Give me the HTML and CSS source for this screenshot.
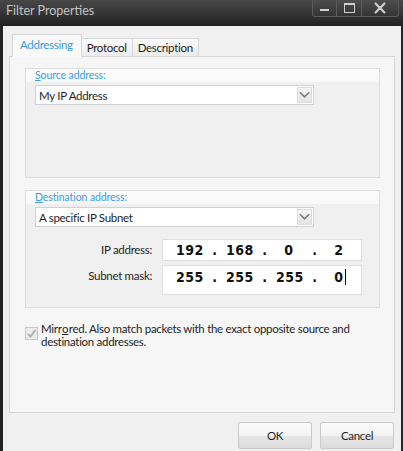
FILE: index.html
```html
<!DOCTYPE html>
<html>
<head>
<meta charset="utf-8">
<link rel="stylesheet" href="styles.css">
</head>
<body>
<div class="window">
  <div class="titlebar">
    <span class="title">Filter Properties</span>
    <div class="caption">
      <div class="cbtn min"><span class="minbar"></span></div>
      <div class="cbtn max"><span class="maxbox"></span></div>
      <div class="cbtn close">
        <svg width="14" height="12" viewBox="0 0 14 12"><path d="M2 1 L12 11 M12 1 L2 11" stroke="#cfcfcf" stroke-width="2.2" fill="none"/></svg>
      </div>
    </div>
  </div>
  <div class="client">
    <div class="tabs">
      <div class="tab active">Addressing</div>
      <div class="tab">Protocol</div>
      <div class="tab">Description</div>
    </div>
    <div class="panel">
      <div class="group g1">
        <div class="ghead"><u>S</u>ource address:</div>
        <div class="combo"><span>My IP Address</span><span class="drop"><svg width="14" height="10" viewBox="0 0 14 10"><path d="M2 2 L7 7 L12 2" stroke="#7a7a7a" stroke-width="1.6" fill="none"/></svg></span></div>
      </div>
      <div class="group g2">
        <div class="ghead"><u>D</u>estination address:</div>
        <div class="combo"><span>A specific IP Subnet</span><span class="drop"><svg width="14" height="10" viewBox="0 0 14 10"><path d="M2 2 L7 7 L12 2" stroke="#7a7a7a" stroke-width="1.6" fill="none"/></svg></span></div>
        <div class="fields">
          <div class="frow">
            <span class="flabel">IP address:</span>
            <div class="ipbox"><span class="oct">192</span><span class="dot">.</span><span class="oct">168</span><span class="dot">.</span><span class="oct">0</span><span class="dot">.</span><span class="oct">2</span></div>
          </div>
          <div class="frow">
            <span class="flabel">Subnet mask:</span>
            <div class="ipbox tall"><span class="oct">255</span><span class="dot">.</span><span class="oct">255</span><span class="dot">.</span><span class="oct">255</span><span class="dot">.</span><span class="oct"><span class="caret">0</span></span></div>
          </div>
        </div>
      </div>
      <div class="check">
        <span class="box"><svg width="11" height="11" viewBox="0 0 11 11"><path d="M2 6 L4.5 8.5 L9.5 2" stroke="#b0b0b0" stroke-width="2" fill="none"/></svg></span>
        <span class="ctext">Mirr<u>o</u>red. Also match packets with the exact opposite source and destination addresses.</span>
      </div>
    </div>
    <div class="buttons">
      <div class="btn">OK</div>
      <div class="btn">Cancel</div>
    </div>
  </div>
</div>
</body>
</html>
```
FILE: styles.css
```css
html, body {
  margin: 0;
  padding: 0;
  background: #1a1a1a;
}
body {
  font-family: Lato, "Noto Sans", sans-serif;
  font-size: 11.5px;
  letter-spacing: -0.3px;
  color: #1e1e1e;
}
.window {
  width: 403px;
  height: 451px;
  box-sizing: border-box;
  padding: 0 2px 0 3px;
  background: #232323;
  display: flex;
  flex-direction: column;
}
.titlebar {
  height: 26px;
  flex: none;
  display: flex;
  justify-content: space-between;
  align-items: flex-start;
  background: linear-gradient(#474747, #3a3a3a 10px, #2a2a2a 20px, #202020);
  margin: 0 -2px 0 -3px;
  padding: 0 4px 0 5px;
}
.title {
  color: #c4c4c4;
  font-size: 12.5px;
  letter-spacing: 0;
  line-height: 21px;
  padding-left: 1px;
}
.caption {
  display: flex;
}
.cbtn {
  height: 17px;
  border: 1px solid #5c5c5c;
  border-top: none;
  background: linear-gradient(#4d4d4d, #343434);
  display: flex;
  align-items: center;
  justify-content: center;
  box-sizing: border-box;
}
.min { width: 25px; border-radius: 0 0 0 3px; }
.max { width: 25px; border-left: none; }
.close { width: 37px; border-left: none; border-radius: 0 0 3px 0; }
.minbar {
  width: 9px;
  height: 2px;
  background: #cfcfcf;
  margin-top: 4px;
}
.maxbox {
  width: 9px;
  height: 7px;
  border: 1px solid #cfcfcf;
  border-top-width: 2px;
}
.client {
  flex: 1;
  background: #f0f0f0;
  padding: 8px 5px 0 6px;
  display: flex;
  flex-direction: column;
}
.tabs {
  display: flex;
  height: 22px;
  padding-left: 3px;
  align-items: flex-end;
}
.tab {
  height: 18px;
  box-sizing: border-box;
  border: 1px solid #d6d6d6;
  border-bottom: none;
  margin-left: -1px;
  padding: 0 5px 0 5px;
  line-height: 18px;
  background: linear-gradient(#fafafa, #ebebeb);
}
.tab.active {
  height: 23px;
  background: #f9f9f9;
  color: #3a9ce0;
  padding: 0 8px 0 7px;
  line-height: 20px;
  margin-left: 0;
  position: relative;
  z-index: 1;
  margin-bottom: -1px;
}
.panel {
  height: 357px;
  box-sizing: border-box;
  border: 1px solid #d6d6d6;
  background: #f6f6f6;
  padding: 11px 14px 0 15px;
  margin-right: 1px;
}
.group {
  border: 1px solid #dedede;
  background: #f0f0f0;
  padding: 0 0 0 9px;
  box-sizing: border-box;
}
.g1 { height: 110px; }
.g2 { height: 118px; margin-top: 12px; }
.ghead {
  height: 13px;
  line-height: 12px;
  margin-left: -9px;
  padding-left: 9px;
  background: linear-gradient(#fdfdfd, #f8f8f8);
  color: #3a9ce0;
  font-size: 10.5px;
  letter-spacing: -0.1px;
}
.combo {
  margin-top: 3px;
  width: 279px;
  height: 20px;
  box-sizing: border-box;
  border: 1px solid #d0d0d0;
  background: #fff;
  display: flex;
  align-items: center;
  justify-content: space-between;
  padding: 0 1px 0 3px;
}
.drop {
  width: 15px;
  height: 16px;
  border: 1px solid #dcdcdc;
  background: linear-gradient(#f4f4f4, #e4e4e4);
  display: flex;
  align-items: center;
  justify-content: center;
  box-sizing: border-box;
}
.fields {
  margin-top: 12px;
  display: flex;
  flex-direction: column;
  gap: 4px;
}
.frow {
  display: flex;
  align-items: flex-start;
}
.flabel {
  width: 117px;
  text-align: right;
  padding-right: 10px;
  line-height: 22px;
}
.ipbox {
  width: 200px;
  height: 22px;
  box-sizing: border-box;
  border: 1px solid #e0e0e0;
  background: #fff;
  display: flex;
  align-items: center;
  padding-left: 13px;
  font-family: "DejaVu Sans Condensed", "DejaVu Sans", sans-serif;
  font-weight: bold;
  font-size: 14px;
  letter-spacing: 0.5px;
  color: #111;
}
.ipbox.tall { height: 30px; align-items: flex-start; padding-top: 3px; }
.oct { display: inline-block; width: 26px; text-align: center; line-height: 16px; }
.dot { display: inline-block; width: 24px; text-align: center; line-height: 16px; padding-left: 2px; box-sizing: border-box; }
.caret { border-right: 1px solid #000; padding-right: 1px; margin-left: 2px; }
.check {
  display: flex;
  align-items: flex-start;
  margin-top: 14px;
}
.box {
  width: 11px;
  height: 11px;
  border: 1px solid #c8c8c8;
  background: #ececec;
  flex: none;
  margin-top: 5px;
  margin-right: 3px;
  display: flex;
}
.ctext {
  width: 310px;
  line-height: 13px;
}
.ctext u {
  letter-spacing: 0;
  margin: 0 0.4px;
}
.buttons {
  display: flex;
  justify-content: flex-end;
  gap: 8px;
  margin-top: 9px;
  padding-right: 2px;
}
.btn {
  width: 74px;
  height: 27px;
  box-sizing: border-box;
  border: 1px solid #c9c9c9;
  border-radius: 2px;
  background: linear-gradient(#fbfbfb, #f3f3f3 50%, #e6e6e6 51%, #dcdcdc);
  text-align: center;
  line-height: 25px;
}
```
